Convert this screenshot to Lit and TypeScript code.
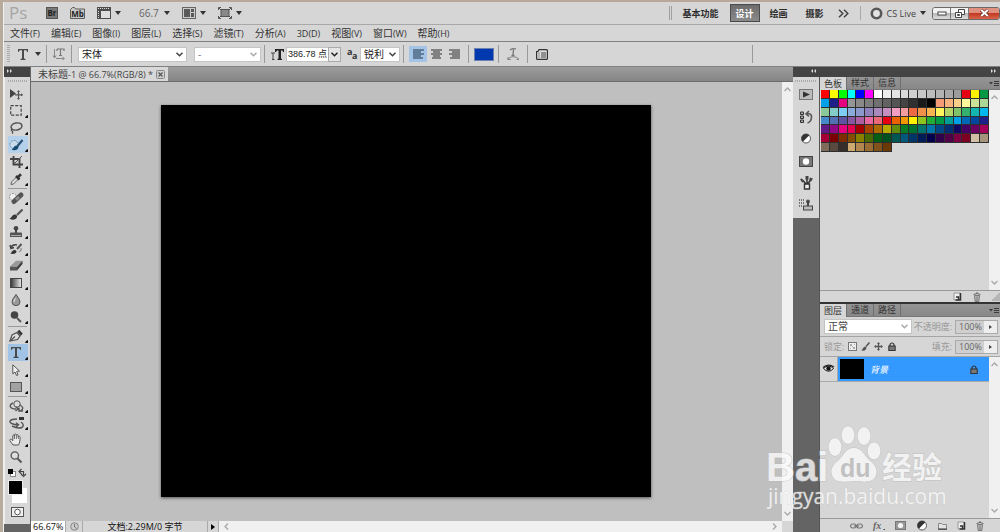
import { LitElement, html, css, svg, nothing } from "lit";
import { customElement, property } from "lit/decorators.js";

const base = css`
  * { box-sizing: border-box; }
  button, input, select {
    font: inherit; color: inherit; margin: 0; padding: 0; border: 0;
    background: none; border-radius: 0; appearance: none; outline: none;
  }
  svg { display: block; flex: none; overflow: visible; }
`;

const art: Record<string, [number, number, unknown]> = {
  bridge: [12, 12, svg`<rect x=".5" y=".5" width="11" height="11" fill="#787878" stroke="#555"/><text x="6" y="9" text-anchor="middle" font-size="8" font-weight="700" fill="#222">Br</text>`],
  mini: [15, 12, svg`<path d="M.5 11.500V2.500l2-2h2l1 1.500h9v9.500z" fill="#c8c8c8" stroke="#5d5d5d"/><text x="7.500" y="10" text-anchor="middle" font-size="8" font-weight="700" fill="#222">Mb</text>`],
  extras: [14, 12, svg`<path d="M0 0h14v12H0z" fill="#4d4d4d"/><path d="M4 4h9v7H4z" fill="#dedede"/><path d="M1 1.500h12" stroke="#ddd" stroke-dasharray="1 1"/><path d="M1.500 4v7" stroke="#ddd" stroke-dasharray="1 1"/>`],
  arrange: [14, 12, svg`<path d="M0 0h14v12H0z" fill="#666"/><path d="M1 1h12v10H1z" fill="#ccc"/><path d="M2 2h6v8H2zM9 2h3v3H9zM9 6h3v4H9z" fill="#5a5a5a"/>`],
  screen: [14, 12, svg`<path d="M3 2.500h8v7H3z" fill="#888" stroke="#555"/><path d="M.5 3V.5H3M11 .5h2.500V3M13.500 9v2.500H11M3 11.500H.5V9M1 1l2 2M13 1l-2 2M1 11l2-2M13 11l-2-2" fill="none" stroke="#555"/>`],
  drop: [6, 4, svg`<path d="M0 0h6L3 4z" fill="#333"/>`],
  chev: [7, 5, svg`<path d="M.5.700 3.500 3.700 6.500.700" fill="none" stroke="currentColor" stroke-width="1.500"/>`],
  more: [11, 9, svg`<path d="M1 .8 4.800 4.500 1 8.200M6 .8 9.800 4.500 6 8.200" fill="none" stroke="#444" stroke-width="1.500"/>`],
  ring: [13, 13, svg`<circle cx="6.500" cy="6.500" r="4.700" fill="#e4e4e4" stroke="#585858" stroke-width="2.600"/>`],
  min: [10, 5, svg`<rect x="1" y="1" width="8" height="3" fill="#fff" stroke="#444"/>`],
  restore: [10, 9, svg`<path d="M3.500.5h6v5h-6z" fill="#fff" stroke="#444"/><path d="M.5 3.500h6v5h-6z" fill="#fff" stroke="#444"/><path d="M2.500 5.500h2v1h-2z" fill="none" stroke="#444"/>`],
  close: [9, 8, svg`<path d="M1 1l7 6M8 1 1 7" stroke="#6d2b22" stroke-width="3.600"/><path d="M1.200 1l6.600 6M7.800 1 1.200 7" stroke="#fff" stroke-width="2"/>`],
  typeT: [10, 11, svg`<path d="M0 0h10v3h-.8C9 1.500 8.500 1.200 7 1.200H6V9.500l1.500.5v1h-5v-1L4 9.500V1.200H3C1.500 1.200 1 1.500.800 3H0z" fill="#4a4a4a"/>`],
  orient: [12, 12, svg`<path d="M1.500 1v8M0 7.500 1.500 10 3 7.500" fill="none" stroke="#888"/><path d="M4 1h7v2M4 3V1M7.500 1v6M6 7.500h3" fill="none" stroke="#777" stroke-width="1.200"/><path d="M3 10.500h8M9.500 9l2 1.500-2 1.500" fill="none" stroke="#888"/>`],
  size: [13, 11, svg`<path d="M4 0h9v3h-1l-.5-1.500H10v8l1 .5v1H6.500v-1l1-.5v-8H6L5 3H4z" fill="#222"/><path d="M0 4h4M2 4v6M1 10.500h2.500" stroke="#444" fill="none"/>`],
  aa: [11, 11, svg`<text x="0" y="6" font-size="9" font-weight="700" fill="#333">a</text><text x="5" y="10" font-size="9" font-weight="700" fill="#333">a</text>`],
  left: [11, 11, svg`<path d="M0 1h11M0 3h8M0 5h11M0 7h8M0 9h10" stroke="#4d6680" stroke-width="1.400"/>`],
  center: [11, 11, svg`<path d="M0 1h11M2 3h7M0 5h11M2 7h7M1 9h9" stroke="#666" stroke-width="1.400"/>`],
  right: [11, 11, svg`<path d="M0 1h11M3 3h8M0 5h11M3 7h8M1 9h10" stroke="#666" stroke-width="1.400"/>`],
  warp: [12, 12, svg`<path d="M3 2q3-2 6-1M6.500 1.500 6 7M4.500 7.500h3" fill="none" stroke="#777" stroke-width="1.300"/><path d="M0 11.500Q6 6 12 11M1 9v2.500h3M9.500 11.500H12" fill="none" stroke="#888"/>`],
  charPanel: [12, 11, svg`<path d="M.6 2.500h1.400l1-1.900h7.500q.9 0 .9.900v8q0 .9-.9.900H1.500q-.9 0-.9-.9z" fill="#ddd" stroke="#333" stroke-width="1.200"/><path d="M2.500 4h1M5 4h5M2.500 6h1M5 6h5M2.500 8h1M5 8h5" stroke="#444"/>`],
  x: [9, 9, svg`<rect x=".5" y=".5" width="8" height="8" rx="1" fill="#d0d0d0" stroke="#888"/><path d="M2.500 2.500l4 4M6.500 2.500l-4 4" stroke="#555" stroke-width="1.200"/>`],

  move: [14, 12, svg`<path d="M1 1v9l6-4.500z" fill="#444"/><path d="M9.500 3v7.500M6 6.800h7.500" stroke="#555" stroke-width="1.200"/><path d="M9.500 2 8 4h3zM9.500 12 8 10h3zM14 6.800 12 5.300v3z" fill="#555"/>`],
  marquee: [12, 11, svg`<rect x=".7" y=".7" width="10.500" height="9.500" fill="none" stroke="#444" stroke-width="1.200" stroke-dasharray="3 1.500"/>`],
  lasso: [14, 12, svg`<ellipse cx="7.500" cy="4.500" rx="5.500" ry="3.500" transform="rotate(-12 7.500 4.500)" fill="none" stroke="#505050" stroke-width="1.500"/><path d="M3 6.500q-1.500 1.500 0 2.500t0 2.500" fill="none" stroke="#505050" stroke-width="1.200"/>`],
  quick: [14, 12, svg`<circle cx="5" cy="5.500" r="4" fill="#c9dceb" stroke="#5f88aa" stroke-dasharray="2 1"/><path d="M13.500 1 8.500 7" stroke="#285475" stroke-width="2.200"/><path d="M2.500 10.500c2 0 2-4 5-4s2 3 .5 4-4 1-5.500 0z" fill="#174a70"/>`],
  crop: [13, 12, svg`<path d="M3.500 0v8.500H13M0 3h9.500v9" fill="none" stroke="#444" stroke-width="1.900"/><path d="M4 8 12 0" stroke="#555"/>`],
  eyedrop: [13, 12, svg`<path d="M1 11.500 1.500 9 6.500 4l2 2-5 5z" fill="#ddd" stroke="#555" stroke-width=".9"/><path d="M6 3l3.500 3.500M7.500 4.500 11 1.200" stroke="#333" stroke-width="2.600"/>`],
  heal: [15, 12, svg`<circle cx="4" cy="5" r="3.500" fill="#f0f0f0" stroke="#888" stroke-dasharray="2 1"/><path d="M5 9.500 12 3" stroke="#555" stroke-width="5" stroke-linecap="round"/><path d="M7 7.700 10 5" stroke="#8a8a8a" stroke-width="3"/>`],
  brush: [14, 11, svg`<path d="M13.500.5 8 6" stroke="#555" stroke-width="2.200"/><path d="M.5 9.500C3 9 3 5 6.500 5.500 9.500 6.500 8 10 5 10.500 3 11 1.500 10.500.5 9.500z" fill="#383838"/>`],
  stamp: [12, 12, svg`<circle cx="6" cy="2.300" r="2.300" fill="#444"/><path d="M5 3h2v4H5z" fill="#444"/><path d="M1 6.500h10q1 0 1 1V11H0V7.500q0-1 1-1z" fill="#555"/><path d="M1 9.500h10" stroke="#aaa"/>`],
  history: [14, 12, svg`<path d="M12.500 1 8 6" stroke="#555" stroke-width="2"/><path d="M1 10.500c2-.5 2-4 5-3.500 3 1 1 4-2 4z" fill="#333"/><path d="M2 5q1-4 6-3M1 2l1 3.500L5 4.500" fill="none" stroke="#444" stroke-width="1.500"/><path d="M12 5q1 3-2 4" fill="none" stroke="#777"/>`],
  eraser: [14, 11, svg`<path d="M1 6.500 7 .800h6.500L8 7z" fill="#999"/><path d="M1 6.500 8 7v3.500H1z" fill="#555"/><path d="M8 7 13.500.800V4L8 10.500z" fill="#3c3c3c"/>`],
  gradient: [12, 10, svg`<defs><linearGradient id="g"><stop stop-color="#333"/><stop offset="1" stop-color="#eee"/></linearGradient></defs><rect x=".5" y=".5" width="11" height="9" fill="url(#g)" stroke="#444"/>`],
  blur: [10, 12, svg`<path d="M5 .5Q9 5.500 9 8A4 3.600 0 0 1 1 8Q1 5.500 5 .5z" fill="#999" stroke="#555"/><path d="M3 8q0-2 1.500-3.500" stroke="#eee" fill="none"/>`],
  dodge: [12, 12, svg`<circle cx="4.500" cy="4" r="3.800" fill="#444"/><path d="M7 7l4 4" stroke="#555" stroke-width="1.800"/>`],
  pen: [14, 12, svg`<path d="M1 11 3 5 8 2.500 11 6 8.500 9.500z" fill="#ddd" stroke="#505050" stroke-width="1.200"/><path d="M1 11 6 6.500M8.500 1.500l3.500 4" stroke="#505050" stroke-width="1.200"/><path d="M9.500.5 13 4.500" stroke="#333" stroke-width="2"/>`],
  path: [8, 12, svg`<path d="M.800.800v9L3 8l1.500 3.500 1.500-.6L4.700 7.300 7.500 7z" fill="#f2f2f2" stroke="#555"/>`],
  rect: [12, 10, svg`<rect x=".5" y=".5" width="11" height="9" fill="#a2a2a2" stroke="#555"/>`],
  rot3d: [15, 12, svg`<circle cx="8" cy="4" r="3.200" fill="#ddd" stroke="#555"/><path d="M4 3C-1 5 1 9 7 9M11 5q5 3 1 5.500M7 7l2 2-2.500 2M14 11H10V7.500" fill="none" stroke="#555" stroke-width="1.400"/>`],
  cam3d: [15, 12, svg`<path d="M10 0h5v3h-5z" fill="#333"/><path d="M8 2C0 2-1 5.500 4 7q3 1 5 1M7 5.800l2.500 2L7 10M12 5q4 3 1 5.500-4 1.500-10-1.500" fill="none" stroke="#555" stroke-width="1.400"/>`],
  hand: [14, 13, svg`<path d="M4 12Q2 9 .8 7.500c-.5-1 1-1.800 2-.7l1 1V3c0-1.300 1.700-1.300 1.700 0V2c0-1.300 1.900-1.300 1.900 0v.5c0-1.200 1.800-1.200 1.800 0V4c0-1.200 1.900-1 1.900.2 0 4-.6 5.800-1.600 7.800z" fill="#ececec" stroke="#555"/><path d="M5.500 3v3M7.400 2.500V6M9.300 3.500V6" stroke="#666" stroke-width=".9"/>`],
  zoom: [12, 12, svg`<circle cx="4.800" cy="4.500" r="3.700" fill="#ddd" stroke="#555" stroke-width="1.300"/><path d="M7.500 7.500l4 4" stroke="#555" stroke-width="1.900"/>`],
  defaults: [8, 8, svg`<rect x="2.500" y="2.500" width="5" height="5" fill="#fff" stroke="#888"/><path d="M0 0h5v5H0z"/>`],
  swap: [8, 8, svg`<path d="M1.500 2.500H5.500V6M3.500 0 1 2.500 3.500 5M3 5l2.500 2.500L8 5" fill="none" stroke="#444" stroke-width="1.200"/>`],
  mask: [13, 10, svg`<rect x=".5" y=".5" width="12" height="9" fill="#eee" stroke="#555"/><circle cx="6.500" cy="5" r="2.800" fill="#fff" stroke="#555"/>`],

  play: [14, 12, svg`<rect x=".5" y=".5" width="13" height="10" fill="#bbb" stroke="#777"/><path d="M4 2.500 11 5.500 4 8.500z" fill="#333"/>`],
  hist: [13, 13, svg`<path d="M.5 1h3v2.500h-3zM.5 5h3v2.500h-3zM.5 9h3v2.500h-3z" fill="#aaa" stroke="#333"/><path d="M7 3q5-1 4.500 3.500T7.500 12M9 0 6 3l3 2.500" fill="none" stroke="#555" stroke-width="1.600"/>`],
  adjust: [12, 12, svg`<circle cx="6" cy="5.500" r="4.500" fill="#fff" stroke="#555"/><path d="M9.300 2.300a4.500 4.500 0 1 0-6.500 6.500z" fill="#333"/>`],
  maskP: [14, 11, svg`<rect x=".5" y=".5" width="13" height="10" fill="#777" stroke="#444"/><circle cx="7" cy="5.500" r="3.200" fill="#fff"/>`],
  brushes: [13, 14, svg`<path d="M4.500 8h5v5h-5z" fill="#eee" stroke="#333" stroke-width="1.400"/><path d="M6 8 3 4.500M7 8V2M8 7.500l3-4" stroke="#333" stroke-width="1.500"/><path d="M0 3l2-.5 2.500 3L2 6.500zM5.500 0h3v3.500h-3zM10 1.500l3 1-2 3-2-1z" fill="#444"/>`],
  clone: [14, 12, svg`<path d="M0 1h5M0 4h5M0 7h3" stroke="#555" stroke-width="1.500" stroke-dasharray="1 1"/><circle cx="9" cy="2.500" r="2" fill="#555"/><path d="M9 2v5" stroke="#444" stroke-width="2"/><rect x="4.500" y="7" width="9" height="4" fill="#bbb" stroke="#444"/>`],
  menu: [10, 7, svg`<path d="M0 2h4L2 4.500zM5 1h5v1H5zM5 3h5v1H5zM5 5h5v1H5z" fill="#3a3a3a"/>`],
  page: [9, 9, svg`<path d="M1 1h6v7H1z" fill="#ededed" stroke="#999"/><path d="M7.500 1v7H2.500M3 5h2.500v3" fill="none" stroke="#333" stroke-width="1.500"/>`],
  trash: [8, 10, svg`<path d="M1.500 3.500h5l-.7 6H2.200z" fill="#bbb" stroke="#777"/><path d="M.5 2.500q3.500-2 7 0M3 1h2" fill="none" stroke="#666"/><path d="M4 4.500v4.500" stroke="#777"/>`],
  grip: [8, 8, svg`<path d="M6 0h2v8H0V6h2V4h2V2h2z" fill="#b5b5b5"/>`],
  eye: [11, 8, svg`<path d="M.5 3.500Q5.500-1.500 10.500 3.500 5.500 9 .5 3.500z" fill="#eee" stroke="#222"/><circle cx="5.500" cy="3.500" r="2.200" fill="#111"/><path d="M0 2.500Q5-2 11 2" fill="none" stroke="#222" stroke-width="1.300"/>`],
  lock: [8, 9, svg`<path d="M2 4.500V3a2 2 0 0 1 4 0v1.500" fill="none" stroke="#333" stroke-width="1.200"/><rect x=".8" y="4" width="6.400" height="4.500" fill="#777" stroke="#333"/>`],
  lpix: [9, 9, svg`<rect x=".5" y=".5" width="8" height="8" fill="#eee" stroke="#777"/><path d="M2 2h2v2h1v1h2v2H5V5H4V4H2zM6 2h1v1H6zM2 6h1v1H2z" fill="#aaa"/>`],
  lbrush: [9, 9, svg`<path d="M8.500.5 5 4.500" stroke="#555" stroke-width="1.500"/><path d="M0 8c2 0 2-3.500 4.500-3.500C6.500 5.500 5 8 3.500 8.500 2 9 1 8.500 0 8z" fill="#555"/>`],
  lmove: [9, 9, svg`<path d="M4.500 1v7M1 4.500h7" stroke="#555" stroke-width="1.300"/><path d="M4.500 0 3 2h3zM4.500 9 3 7h3zM0 4.500 2 3v3zM9 4.500 7 3v3z" fill="#555"/>`],
  link: [13, 6, svg`<rect x=".6" y="1" width="5.500" height="4" rx="2" fill="none" stroke="#777" stroke-width="1.200"/><rect x="6.900" y="1" width="5.500" height="4" rx="2" fill="none" stroke="#777" stroke-width="1.200"/><path d="M4 3h5" stroke="#666"/>`],
  fx: [12, 10, svg`<text x="0" y="8" font-size="10" font-style="italic" font-weight="700" font-family="Liberation Serif, serif" fill="#666">fx</text><path d="M10.500 8h1.500v1h-1.500z" fill="#444"/>`],
  maskB: [11, 9, svg`<rect x=".5" y=".5" width="10" height="8" fill="#999" stroke="#777"/><circle cx="5.500" cy="4.500" r="2.600" fill="#f4f4f4"/>`],
  folder: [9, 8, svg`<path d="M.5 7V1.500h3l1 1h4V7z" fill="#e4e4e4" stroke="#888"/><path d="M0 7.200h9" stroke="#444" stroke-width="1.200"/>`],
  status: [9, 9, svg`<circle cx="4.500" cy="4.500" r="3.800" fill="#ccc" stroke="#888"/><path d="M4.500 2v3l2 1.500" fill="none" stroke="#777"/>`],
  tri: [4, 6, svg`<path d="M0 0v6l4-3z" fill="currentColor"/>`],
  triSmall: [3, 4, svg`<path d="M0 0v4l3-2z" fill="#444"/>`],
};

const icon = (name: string) => {
  const [w, h, body] = art[name];
  return html`<svg width=${w} height=${h} viewBox="0 0 ${w} ${h}" font-family="Open Sans, sans-serif" aria-hidden="true">${body}</svg>`;
};

const dropdown = (label: string, value: string, cls: string) => html`
  <span class="drop ${cls}">
    <select aria-label=${label}><option>${value}</option></select>${icon("chev")}
  </span>`;

const dropdownCss = css`
  .drop { display: grid; grid-template-columns: 1fr 13px; height: 15px; background: #fff; align-items: center; border: 1px solid #c4c4c4; }
  .drop select { grid-area: 1 / 1 / 2 / 3; height: 13px; padding-left: 3px; min-width: 0; line-height: 13px; }
  .drop svg { grid-area: 1 / 2; justify-self: center; pointer-events: none; color: #444; }
  .drop.off { color: #777; }
  .drop.off svg { color: #aaa; }
`;

@customElement("ps-appbar")
class AppBar extends LitElement {
  static styles = [base, css`
    :host { display: flex; height: 23px; align-items: center; border-bottom: 1px solid #a8a8a8; padding-left: 5px; background: #d6d6d6; }
    .logo { font: 17px/20px "Open Sans", sans-serif; color: #a5a5a5; width: 37px; }
    .tools { display: flex; align-items: center; gap: 12px; }
    .pair { display: flex; align-items: center; gap: 4px; }
    .level { font-size: 10px; color: #666; padding: 0 1px 0 6px; }
    .modes { margin-left: auto; display: flex; align-items: center; gap: 2px; }
    .bar { width: 3px; height: 14px; border: solid #a0a0a0; border-width: 0 1px; }
    .mode { width: 34px; height: 18px; font-weight: 700; font-size: 9px; color: #2b2b2b; text-align: center; }
    .mode.wide { width: 54px; }
    .mode.on { width: 30px; color: #fff; background: linear-gradient(#6c6c6c, #8a8a8a); border: 1px solid #4a4a4a; }
    .live { display: flex; align-items: center; gap: 4px; font-size: 9px; color: #444; border-left: 1px solid #a8a8a8; height: 14px; padding-left: 9px; margin-left: 6px; }
    .win { display: flex; height: 13px; margin-left: 6px; border: 1px solid #6a6a6a; border-radius: 3px; overflow: hidden; }
    .win button { width: 18px; display: grid; place-items: center; background: linear-gradient(#f2f2f2 45%, #b8b8b8 50%, #ddd); border-right: 1px solid #777; }
    .win .x { width: 30px; background: linear-gradient(#e0907f 45%, #c23a24 50%, #d9634c); border: 0; }
    .more { width: 20px; display: grid; place-items: center; }
  `];
  render() {
    return html`
      <span class="logo">Ps</span>
      <div class="tools">
        <button aria-label="Bridge">${icon("bridge")}</button>
        <button aria-label="Mini Bridge">${icon("mini")}</button>
        <button class="pair" aria-label="查看额外内容">${icon("extras")}${icon("drop")}</button>
        <button class="pair" aria-label="缩放级别"><span class="level">66.7</span>${icon("drop")}</button>
        <button class="pair" aria-label="排列文档">${icon("arrange")}${icon("drop")}</button>
        <button class="pair" aria-label="屏幕模式">${icon("screen")}${icon("drop")}</button>
      </div>
      <div class="modes">
        <span class="bar"></span>
        <button class="mode wide">基本功能</button>
        <button class="mode on">设计</button>
        <button class="mode">绘画</button>
        <button class="mode">摄影</button>
        <button class="more" aria-label="更多">${icon("more")}</button>
      </div>
      <button class="live">${icon("ring")}<span>CS Live</span>${icon("drop")}</button>
      <div class="win">
        <button aria-label="最小化">${icon("min")}</button>
        <button aria-label="还原">${icon("restore")}</button>
        <button class="x" aria-label="关闭">${icon("close")}</button>
      </div>`;
  }
}

const MENUS = [["文件", "F"], ["编辑", "E"], ["图像", "I"], ["图层", "L"], ["选择", "S"], ["滤镜", "T"], ["分析", "A"], ["3D", "D"], ["视图", "V"], ["窗口", "W"], ["帮助", "H"]];

@customElement("ps-menubar")
class MenuBar extends LitElement {
  static styles = [base, css`
    :host { display: flex; gap: 11px; height: 17px; align-items: center; padding-left: 6px; background: #d6d6d6; border-bottom: 1px solid #808080; color: #333; }
    button { font-size: 10px; line-height: 16px; white-space: nowrap; }
    .key { font-size: 9px; }
  `];
  render() {
    return MENUS.map(([name, key]) => html`<button>${name === "3D" ? html`<span class="key">3D</span>` : name}<span class="key">(${key})</span></button>`);
  }
}

@customElement("ps-options")
class OptionsBar extends LitElement {
  static styles = [base, dropdownCss, css`
    :host { display: flex; height: 25px; align-items: center; background: #d6d6d6; border-bottom: 1px solid #808080; font-size: 10px; color: #222; padding-left: 3px; }
    .grip { width: 3px; height: 18px; background: repeating-linear-gradient(#aaa 0 1px, #d6d6d6 1px 2px); }
    .group { display: flex; align-items: center; height: 18px; padding: 0 6px; gap: 6px; border-right: 1px solid #999; }
    .tool { padding: 0 5px 0 8px; gap: 7px; }
    .faces { gap: 7px; padding-right: 3px; }
    .font { width: 109px; }
    .style { width: 67px; }
    .edge { width: 40px; }
    .metrics { gap: 2px; padding-right: 3px; }
    .size { display: flex; height: 15px; margin-right: 4px; }
    .size input { width: 42px; background: #fff; border: solid #c4c4c4; border-width: 1px 0 1px 1px; padding-left: 1px; font: 9px/13px "Liberation Sans", "Noto Sans CJK SC", sans-serif; }
    .size button { width: 13px; display: grid; place-items: center; border: 1px solid #aaa; background: #e4e4e4; }
    .aligns { gap: 0; padding: 0 5px; }
    .aligns button { width: 18px; height: 16px; display: grid; place-items: center; }
    .aligns .on { background: #a3c4e6; }
    .ink { padding: 0 4px 0 5px; }
    .swatch { width: 20px; height: 13px; background: #0038b0; border: 1px solid #6c7fae; }
    .icon { padding: 0 8px; }
    .last { flex: 0 1 225px; }
  `];
  render() {
    return html`
      <span class="grip"></span>
      <div class="group tool">${icon("typeT")}${icon("drop")}</div>
      <div class="group"><button aria-label="切换文本取向">${icon("orient")}</button></div>
      <div class="group faces">
        ${dropdown("字体", "宋体", "font")}
        ${dropdown("字体样式", "-", "style off")}
      </div>
      <div class="group metrics">
        ${icon("size")}
        <span class="size"><input aria-label="字体大小" value="386.78 点"><button aria-label="选择大小">${icon("chev")}</button></span>
        ${icon("aa")}
        ${dropdown("消除锯齿", "锐利", "edge")}
      </div>
      <div class="group aligns">
        <button class="on" aria-label="左对齐">${icon("left")}</button>
        <button aria-label="居中对齐">${icon("center")}</button>
        <button aria-label="右对齐">${icon("right")}</button>
      </div>
      <div class="group ink"><button class="swatch" aria-label="文本颜色"></button></div>
      <div class="group icon"><button aria-label="变形文字">${icon("warp")}</button></div>
      <div class="group icon last"><button aria-label="字符和段落面板">${icon("charPanel")}</button></div>`;
  }
}

const TOOLS = [
  ["move", "marquee", "lasso", "quick", "crop", "eyedrop"],
  ["heal", "brush", "stamp", "history", "eraser", "gradient", "blur", "dodge"],
  ["pen", "typeT", "path", "rect"],
  ["rot3d", "cam3d", "hand", "zoom"],
];

@customElement("ps-toolbox")
class Toolbox extends LitElement {
  static styles = [base, css`
    :host { display: flex; flex-direction: column; width: 27px; background: #646464; border-right: 1px solid #666; }
    .head { height: 10px; background: #444; padding-left: 1px; }
    .panel { background: #d6d6d6; padding: 3px 3px 7px; display: flex; flex-direction: column; align-items: stretch; border-left: 1px solid #efefef; }
    .dots { height: 2px; margin-bottom: 3px; background: repeating-linear-gradient(90deg, #aaa 0 1px, #d6d6d6 1px 2px); }
    .set { display: grid; }
    .set + .set { border-top: 1px solid #999; margin-top: 1px; }
    .set button { height: 17px; display: grid; grid-template-columns: 16px 4px; align-items: center; justify-items: center; }
    .set i { align-self: end; border: solid; border-color: transparent #111 #111 transparent; margin-bottom: 1px; width: 3px; height: 3px; border-width: 1px 2px 2px 1px; }
    .set .hover { background: #b4d0ea; }
    .set .on { background: #a0c3e6; }
    .mini { display: flex; justify-content: space-between; padding: 4px 1px 3px 0; }
    .colors { display: grid; height: 23px; }
    .fg, .bg { grid-area: 1 / 1; width: 15px; height: 15px; }
    .fg { background: #000; border: 1px solid #eee; z-index: 1; }
    .bg { background: #fff; align-self: end; justify-self: end; }
    .mask { align-self: center; margin-top: 4px; }
  `];
  render() {
    return html`
      <div class="head"><svg width="9" height="8" viewBox="0 0 9 8"><path d="M2 2 4 4 2 6zM5 2l2 2-2 2z" fill="#ddd"/></svg></div>
      <div class="panel">
        <div class="dots"></div>
        ${TOOLS.map((set) => html`<div class="set">${set.map((t) => html`
          <button aria-label=${t} class=${t === "quick" ? "hover" : t === "typeT" ? "on" : ""}>${icon(t)}${t === "move" || t === "zoom" ? nothing : html`<i></i>`}</button>`)}</div>`)}
        <div class="mini">${icon("defaults")}${icon("swap")}</div>
        <div class="colors"><button class="fg" aria-label="前景色"></button><button class="bg" aria-label="背景色"></button></div>
        <button class="mask" aria-label="快速蒙版">${icon("mask")}</button>
      </div>`;
  }
}

@customElement("ps-scroll")
class ScrollTrack extends LitElement {
  @property({ type: Boolean, reflect: true }) flat = false;
  static styles = [base, css`
    :host { display: flex; flex-direction: column; justify-content: space-between; align-items: center; width: 11px; background: #f0f0f0; padding: 4px 0; }
    :host([flat]) { flex-direction: row; width: auto; padding: 0 4px; }
  `];
  render() {
    const arrow = (d: string) => html`<svg width="7" height="7" viewBox="0 0 7 7"><path d=${d} fill="none" stroke="#a8a8a8" stroke-width="1.300"/></svg>`;
    return this.flat
      ? html`${arrow("M5 .5 2 3.500 5 6.500")}${arrow("M2 .5 5 3.500 2 6.500")}`
      : html`${arrow("M.5 5 3.500 2 6.500 5")}${arrow("M.5 2 3.500 5 6.500 2")}`;
  }
}

@customElement("ps-document")
class DocumentArea extends LitElement {
  static styles = [base, css`
    :host { display: flex; flex-direction: column; min-width: 0; }
    .tabs { height: 15px; background: linear-gradient(#9c9c9c, #858585); border-bottom: 1px solid #6c6c6c; display: flex; }
    .tab { display: flex; align-items: center; gap: 3px; padding: 0 3px 0 7px; background: #d8d8d8; color: #444; font-size: 10px; line-height: 14px; white-space: nowrap; }
    .latin { font-size: 9px; }
    .view { flex: 1; display: flex; min-height: 0; }
    .stage { flex: 1; display: grid; place-items: center; background: #bfbfbf; padding: 0 2px 2px 0; }
    .art { width: 490px; height: 392px; background: #000; box-shadow: 0 1px 3px #555; }
    .status { display: flex; height: 11px; background: #d6d6d6; font-size: 9px; line-height: 11px; color: #111; }
    .status > * { border-right: 1px solid #aaa; }
    .status input { width: 35px; background: #fff; padding-left: 2px; height: 11px; }
    .status .clock { width: 17px; display: grid; place-items: center; }
    .status .info { width: 125px; text-align: center; white-space: nowrap; }
    .status .next { width: 11px; display: grid; place-items: center; color: #000; }
    .status ps-scroll { flex: 1; border: 0; }
    .status .corner { width: 11px; border: 0; }
  `];
  render() {
    return html`
      <div class="tabs"><div class="tab"><span>未标题<span class="latin">-1 @ 66.7%(RGB/8) *</span></span><button aria-label="关闭文档">${icon("x")}</button></div></div>
      <div class="view"><div class="stage"><div class="art"></div></div><ps-scroll></ps-scroll></div>
      <div class="status">
        <input aria-label="缩放" value="66.67%">
        <span class="clock">${icon("status")}</span>
        <span class="info">文档:2.29M/0 字节</span>
        <button class="next" aria-label="状态菜单">${icon("tri")}</button>
        <ps-scroll flat></ps-scroll><span class="corner"></span>
      </div>`;
  }
}

const SWATCHES = `
ff0000 ffff00 00ff00 00ffff 0000ff ff00ff ffffff ececec e3e3e3 d9d9d9 d0d0d0 c8c8c8 bdbdbd b3b3b3 a8a8a8 9c9c9c e60012 fff000 009844
00a0e9 1d2088 e4007f 959595 898989 7d7d7d 707070 626262 545454 444444 303030 1a1a1a 000000 f29b76 f6b37f facd89 fff799 cce198 acd598
89c997 84ccc9 7ecef4 88abda 8c97cb 8f82bc aa89bd c490bf f19ec2 f29c9f ec6941 f19149 f8b551 fff45c b3d465 80c269 32b16c 13b5b1 00b7ee
448aca 556fb5 5f52a0 8957a1 ae5da1 ea68a2 eb6877 e60012 eb6100 f39800 fff100 8fc31f 22ac38 009944 009e96 00a0e9 0068b7 00479d 1d2088
601986 920783 e4007f e5004f a40000 a84200 ac6a00 b7aa00 638c0b 097c25 007130 00736d 0075a9 004986 002e73 100964 440062 6a005f a4005b
a40035 7d0000 7f2d00 834e00 8a8000 486a00 005e15 005020 005752 00597c 003567 001c58 03004c 31004a 500047 7e0043 7d0022 d1c0a5 a6937c
7e6b5a 59493f 362e2b cfa972 b28850 996c33 81511c 6a3906`.trim().split(/\s+/);

@customElement("ps-dock")
class Dock extends LitElement {
  static styles = [base, dropdownCss, css`
    :host { display: grid; grid-template: 10px 1fr / 27px 180px; }
    .head { background: #444; display: flex; justify-content: flex-end; }
    .head svg { margin: 0 2px; }
    .strip { background: #646464; border-right: 1px solid #555; }
    .icons { background: #d6d6d6; padding: 3px 2px 2px; }
    .dots { height: 2px; margin-bottom: 2px; background: repeating-linear-gradient(90deg, #aaa 0 1px, #d6d6d6 1px 2px); }
    .icons button { width: 100%; height: 22px; display: grid; place-items: center; }
    .panels { display: flex; flex-direction: column; background: #d6d6d6; color: #444; font-size: 9px; min-height: 0; }
    .panel { display: flex; flex-direction: column; min-height: 0; }
    .top { flex: 0 0 227px; border-bottom: 2px solid #333; }
    .bottom { flex: 1; }
    .tabs { display: flex; flex: none; height: 13px; background: linear-gradient(#959595, #888); border-bottom: 1px solid #777; padding-right: 1px; }
    .tabs button { width: 27px; line-height: 12px; border-right: 1px solid #707070; color: #333; white-space: nowrap; }
    .tabs .on { background: #d6d6d6; height: 13px; }
    .tabs svg { margin: 3px 0 0 auto; }
    .body { flex: 1; display: flex; min-height: 0; }
    .fill { flex: 1; }
    .grid { display: grid; grid-template: repeat(7, 1fr) / repeat(19, 1fr); width: 168px; height: 62px; margin-left: 1px; }
    .cell { border: solid #2e2e2e; border-width: 0 1px 1px 0; }
    .foot { flex: none; display: flex; align-items: center; justify-content: flex-end; border-top: 1px solid #999; height: 12px; }
    .top .foot { gap: 11px; }
    .bottom .foot { height: 14px; gap: 10px; padding-right: 16px; }
    .row { flex: none; display: flex; align-items: center; height: 20px; border-bottom: 1px solid #a5a5a5; padding: 0 2px 0 4px; }
    .row label { color: #999; line-height: 15px; white-space: nowrap; }
    .mode { width: 88px; font-size: 10px; }
    .mode.off select { color: #444; }
    .pct { display: flex; margin-left: auto; gap: 3px; align-items: center; }
    .pct span { display: flex; border: 1px solid #aaa; height: 14px; }
    .pct input { width: 28px; padding-left: 3px; color: #666; background: #cfcfcf; }
    .pct button { width: 13px; display: grid; place-items: center; background: #eee; }
    .locks { display: flex; gap: 4px; align-items: center; margin-left: 4px; }
    .locks button { width: 9px; display: grid; place-items: center; }
    .layer { display: flex; align-items: stretch; height: 25px; border-bottom: 1px solid #aaa; }
    .eye { width: 18px; display: grid; place-items: center; border-right: 1px solid #aaa; }
    .name { flex: 1; display: flex; align-items: center; gap: 6px; padding: 0 11px 0 2px; background: #3399ff; color: #fff; font-style: italic; }
    .thumb { width: 24px; height: 20px; background: #000; }
    .lockicon { margin-left: auto; }
  `];
  render() {
    const strip = ["play", "hist", "adjust", "maskP", "brushes", "clone"];
    const collapse = (d: string) => html`<svg width="9" height="8" viewBox="0 0 9 8"><path d=${d} fill="#ddd"/></svg>`;
    return html`
      <div class="head">${collapse("M4 2 2 4 4 6zM7 2 5 4 7 6z")}</div>
      <div class="head">${collapse("M2 2 4 4 2 6zM5 2l2 2-2 2z")}</div>
      <div class="strip"><div class="icons"><div class="dots"></div>${strip.map((s) => html`<button aria-label=${s}>${icon(s)}</button>`)}</div></div>
      <div class="panels">
        <section class="panel top">
          <div class="tabs"><button class="on">色板</button><button>样式</button><button>信息</button>${icon("menu")}</div>
          <div class="body">
            <div class="fill"><div class="grid">${SWATCHES.map((c) => html`<span class="cell" style="background:#${c}"></span>`)}</div></div>
            <ps-scroll></ps-scroll>
          </div>
          <div class="foot">${icon("page")}${icon("trash")}${icon("grip")}</div>
        </section>
        <section class="panel bottom">
          <div class="tabs"><button class="on">图层</button><button>通道</button><button>路径</button>${icon("menu")}</div>
          <div class="row">
            ${dropdown("混合模式", "正常", "mode off")}
            <div class="pct"><label for="op">不透明度:</label><span><input id="op" value="100%"><button aria-label="调整不透明度">${icon("triSmall")}</button></span></div>
          </div>
          <div class="row">
            <label>锁定:</label>
            <div class="locks">
              <button aria-label="锁定透明像素">${icon("lpix")}</button>
              <button aria-label="锁定图像像素">${icon("lbrush")}</button>
              <button aria-label="锁定位置">${icon("lmove")}</button>
              <button aria-label="锁定全部">${icon("lock")}</button>
            </div>
            <div class="pct"><label for="fill">填充:</label><span><input id="fill" value="100%"><button aria-label="调整填充">${icon("triSmall")}</button></span></div>
          </div>
          <div class="body">
            <div class="fill"><div class="layer">
              <button class="eye" aria-label="显示图层">${icon("eye")}</button>
              <div class="name"><span class="thumb"></span><span>背景</span><span class="lockicon">${icon("lock")}</span></div>
            </div></div>
            <ps-scroll></ps-scroll>
          </div>
          <div class="foot">${icon("link")}${icon("fx")}${icon("maskB")}${icon("adjust")}${icon("folder")}${icon("page")}${icon("trash")}</div>
        </section>
      </div>`;
  }
}

@customElement("app-root")
class AppRoot extends LitElement {
  static styles = [base, css`
    :host {
      display: flex; flex-direction: column; position: relative; height: 100vh; overflow: hidden; box-sizing: border-box;
      border-top: 2px solid #b8a99a; border-left: 3px solid #b8aa9c; background: #d6d6d6;
      font-family: "Open Sans", "Noto Sans CJK SC", sans-serif;
    }
    .frame { flex: 1; min-height: 0; display: flex; flex-direction: column; border-left: 1px solid #efefef; }
    .work { flex: 1; min-height: 0; display: grid; grid-template-columns: 27px 1fr 207px; }
    .mark { position: absolute; right: 50px; bottom: 16px; pointer-events: none; }
  `];
  render() {
    return html`
      <div class="frame">
        <ps-appbar></ps-appbar>
        <ps-menubar></ps-menubar>
        <ps-options></ps-options>
        <div class="work"><ps-toolbox></ps-toolbox><ps-document></ps-document><ps-dock></ps-dock></div>
      </div>
      <svg class="mark" width="184" height="92" viewBox="0 0 184 92" font-family="Open Sans, Noto Sans CJK SC, sans-serif" opacity=".8">
        <g fill="#fafafa" stroke="#bdbdbd" stroke-width="1" paint-order="stroke">
          <text x="0" y="57" font-size="40" font-weight="700" font-family="Liberation Sans, sans-serif">Bai</text>
          <ellipse cx="69" cy="23" rx="6.500" ry="9"/><ellipse cx="82" cy="11" rx="6.500" ry="9"/><ellipse cx="98" cy="12" rx="6.500" ry="9"/><ellipse cx="108" cy="27" rx="6.500" ry="8.500"/>
          <path d="M88 24c8 0 10 7 15 12 6 5 9 9 7 15-3 8-10 7-22 6-12 1-19 2-22-6-2-6 1-10 7-15 5-5 7-12 15-12z"/>
          <text x="116" y="54" font-size="30" font-weight="700">经验</text>
          <text x="2" y="80" font-size="21" stroke-width=".5">jingyan.baidu.com</text>
        </g>
        <text x="74" y="53" font-size="25" font-weight="700" fill="#bdbdbd" font-family="Liberation Sans, sans-serif">du</text>
      </svg>`;
  }
}
